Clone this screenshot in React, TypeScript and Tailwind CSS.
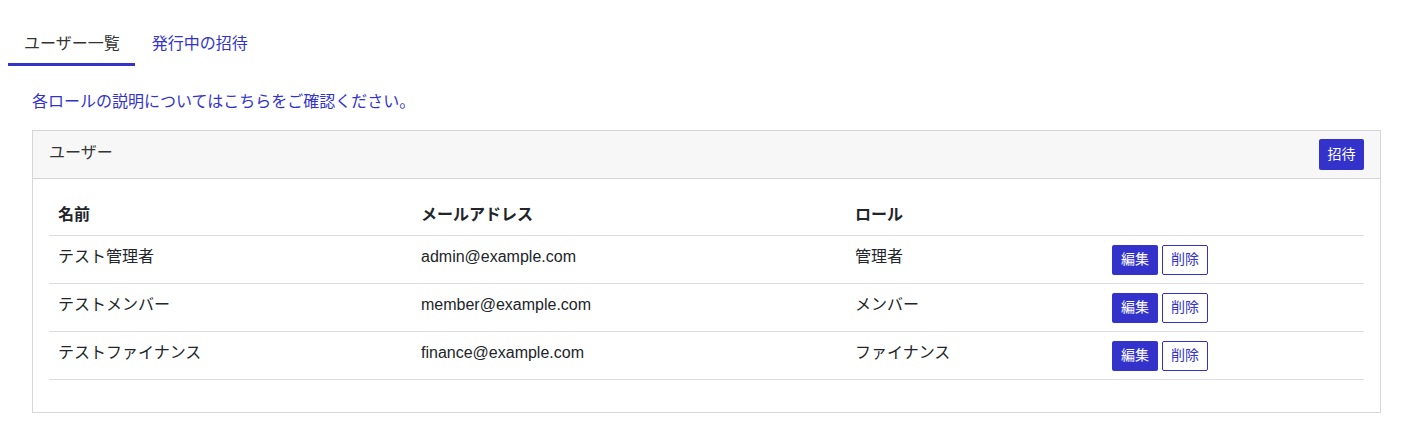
import React from "react";

const rows = [
  { name: "テスト管理者", email: "admin@example.com", role: "管理者" },
  { name: "テストメンバー", email: "member@example.com", role: "メンバー" },
  { name: "テストファイナンス", email: "finance@example.com", role: "ファイナンス" },
];

const font = {
  fontFamily: '"Liberation Sans", "Noto Sans CJK JP", sans-serif',
};

export default function App() {
  return (
    <div className="min-h-[433px] bg-white pl-2 pr-[22px] pt-6 text-[16px] text-[#212529]" style={font}>
      <div className="flex">
        <div className="whitespace-nowrap border-b-[3px] border-[#3333cc] pl-4 pr-[15px] pb-[7px] pt-2 leading-6 text-[#333]">ユーザー一覧</div>
        <div className="whitespace-nowrap border-b-[3px] border-transparent pl-[17px] pr-4 pb-[7px] pt-2 leading-6 text-[#3333cc]">発行中の招待</div>
      </div>
      <div className="pl-6">
        <div className="mt-6 leading-6 text-[#3333cc]">各ロールの説明についてはこちらをご確認ください。</div>
        <div className="mt-4 border border-[#d6d6d6]">
          <div className="flex h-[48px] items-center justify-between border-b border-[#d6d6d6] bg-[#f7f7f7] pl-4 pr-4">
            <span className="text-[#333] leading-6 -mt-[4px]">ユーザー</span>
            <button className="flex h-[31px] w-[45px] items-center justify-center rounded-[2px] bg-[#3333cc] text-[14px] text-white">招待</button>
          </div>
          <div className="p-4 pb-8">
            <div className="grid grid-cols-[363px_434px_257px_1fr] border-b border-[#dedede]">
              <div className="pl-[9px] py-2 leading-6 font-bold">名前</div>
              <div className="pl-[9px] py-2 leading-6 font-bold">メールアドレス</div>
              <div className="pl-[9px] py-2 leading-6 font-bold">ロール</div>
              <div />
            </div>
            {rows.map((r) => (
              <div key={r.email} className="grid h-12 grid-cols-[363px_434px_257px_1fr] items-center border-b border-[#dedede]">
                <div className="pl-[9px] -mt-[5px]">{r.name}</div>
                <div className="pl-[9px] -mt-[5px]">{r.email}</div>
                <div className="pl-[9px] -mt-[5px]">{r.role}</div>
                <div className="flex gap-1 pl-[9px]">
                  <button className="flex h-[30px] w-[46px] items-center justify-center rounded-[2px] bg-[#3333cc] text-[14px] text-white">編集</button>
                  <button className="flex h-[30px] w-[46px] items-center justify-center rounded-[2px] border border-[#3333cc] bg-white text-[14px] text-[#3333cc]">削除</button>
                </div>
              </div>
            ))}
          </div>
        </div>
      </div>
    </div>
  );
}
